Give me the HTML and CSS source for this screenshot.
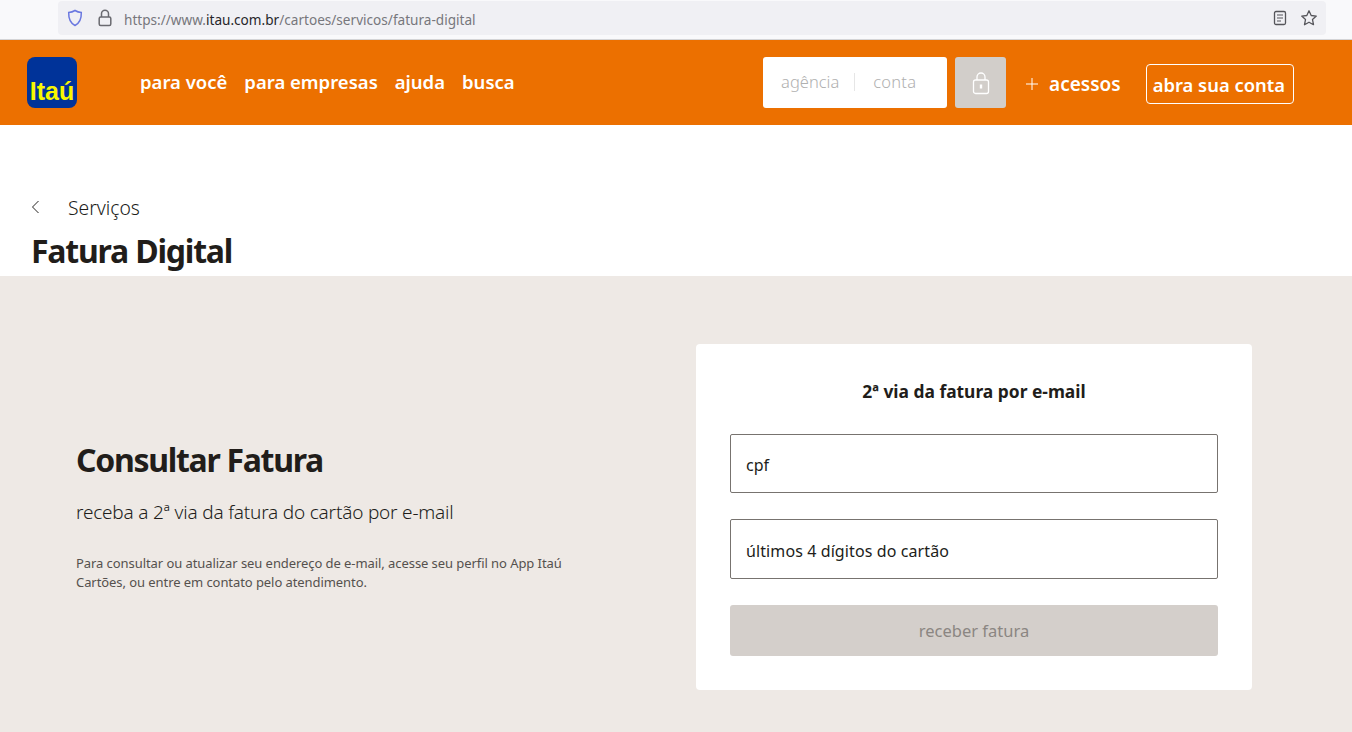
FILE: index.html
```html
<!DOCTYPE html>
<html lang="pt-BR">
<head>
    <meta charset="UTF-8">
    <meta name="viewport" content="width=device-width, initial-scale=1.0">
    <title>Fatura Digital</title>
    <link rel="stylesheet" href="styles.css">
</head>
<body>
    <div class="browser-bar">
        <div class="url-bar">
            <svg class="shield" width="16" height="18" viewBox="0 0 16 18"><path d="M8 1.500c2 1.300 4 1.900 6.300 2 .2 5.500-1.500 10.500-6.300 13-4.800-2.500-6.500-7.500-6.300-13C4 3.400 6 2.800 8 1.500z" fill="none" stroke="#6a78e0" stroke-width="1.500"/></svg>
            <svg class="lock" width="14" height="18" viewBox="0 0 14 18"><path d="M3.500 8V4.800a3.500 3.500 0 0 1 7 0V8" fill="none" stroke="#6a6a70" stroke-width="1.500"/><rect x="1.200" y="8" width="11.600" height="8.400" rx="1.500" fill="none" stroke="#6a6a70" stroke-width="1.500"/></svg>
            <span class="url">https://www.<b>itau.com.br</b>/cartoes/servicos/fatura-digital</span>
            <span class="bar-end">
                <svg width="14" height="16" viewBox="0 0 14 16"><rect x="1.500" y="1.500" width="11" height="13" rx="1.500" fill="none" stroke="#55555a" stroke-width="1.300"/><path d="M4 5h6M4 8h6M4 11h4" stroke="#55555a" stroke-width="1.200"/></svg>
                <svg width="18" height="18" viewBox="0 0 18 18"><path d="M9 1.800l2.200 4.700 5.100.6-3.800 3.500 1 5.100L9 13.200l-4.500 2.500 1-5.100-3.800-3.500 5.100-.6z" fill="none" stroke="#55555a" stroke-width="1.300" stroke-linejoin="round"/></svg>
            </span>
        </div>
    </div>

    <header class="site-header">
        <div class="logo">Itaú</div>
        <nav class="main-nav">
            <a>para você</a>
            <a>para empresas</a>
            <a>ajuda</a>
            <a>busca</a>
        </nav>
        <div class="login-box">
            <span class="login-field">agência</span>
            <span class="login-field conta">conta</span>
        </div>
        <div class="login-btn">
            <svg width="18" height="24" viewBox="0 0 18 24"><path d="M5 9V6a4 4 0 0 1 8 0v3" fill="none" stroke="#fff" stroke-width="1.300"/><rect x="1.500" y="9" width="15" height="13.500" rx="2" fill="none" stroke="#fff" stroke-width="1.300"/><rect x="7.800" y="13.500" width="2.400" height="4" fill="#fff"/></svg>
        </div>
        <div class="acessos">
            <svg width="12" height="12" viewBox="0 0 12 12"><path d="M6 0v12M0 6h12" stroke="#fff" stroke-width="1"/></svg>
            <span>acessos</span>
        </div>
        <a class="abra-conta">abra sua conta</a>
    </header>

    <section class="title-area">
        <div class="back-link">
            <svg width="8" height="14" viewBox="0 0 8 14"><path d="M6.500 1L.5 7l6 6" fill="none" stroke="#252220" stroke-width="1"/></svg>
            <span>Serviços</span>
        </div>
        <h1>Fatura Digital</h1>
    </section>

    <main class="content">
        <div class="intro">
            <h2>Consultar Fatura</h2>
            <p class="lead">receba a 2ª via da fatura do cartão por e-mail</p>
            <p class="note">Para consultar ou atualizar seu endereço de e-mail, acesse seu perfil no App Itaú Cartões, ou entre em contato pelo atendimento.</p>
        </div>
        <form class="card">
            <h3>2ª via da fatura por e-mail</h3>
            <div class="field field-cpf">cpf</div>
            <div class="field field-card">últimos 4 dígitos do cartão</div>
            <div class="submit">receber fatura</div>
        </form>
    </main>
</body>
</html>
```

FILE: styles.css
```css
/* page */
html, body {
    margin: 0;
    padding: 0;
}

body {
    height: 732px;
    overflow: hidden;
    background-color: #fff;
    color: #211d1a;
    font-family: "Noto Sans", "Open Sans", sans-serif;
}

/* browser chrome */
.browser-bar {
    height: 40px;
    padding: 1px 26px 0 58px;
    box-sizing: border-box;
    background-color: #f9f9fb;
    border-bottom: 1px solid #d4d4d6;
}

.url-bar {
    display: flex;
    align-items: center;
    height: 34px;
    padding: 0 8px 0 9px;
    background-color: #f0f0f4;
    border-radius: 4px;
}

.lock {
    margin-left: 15px;
}

.url {
    margin-left: 12px;
    padding-top: 2px;
    font-size: 13.6px;
    color: #77777c;
}

.url b {
    font-weight: 400;
    color: #26262a;
}

.bar-end {
    display: flex;
    align-items: center;
    gap: 13px;
    margin-left: auto;
}

/* orange header */
.site-header {
    display: flex;
    align-items: center;
    height: 85px;
    padding-left: 27px;
    background-color: #ec7000;
    color: #fff;
}

.logo {
    display: flex;
    align-items: flex-end;
    justify-content: center;
    width: 50px;
    height: 51px;
    padding-bottom: 2px;
    box-sizing: border-box;
    background-color: #003399;
    border-radius: 8px;
    color: #f7f700;
    font-family: "Liberation Sans", sans-serif;
    font-size: 25px;
    font-weight: 700;
    line-height: 30px;
}

.main-nav {
    display: flex;
    gap: 17px;
    margin-left: 63px;
    margin-top: -2px;
    font-size: 18.5px;
    font-weight: 600;
}

.login-box {
    display: flex;
    align-items: center;
    width: 184px;
    height: 51px;
    margin-left: auto;
    background-color: #fff;
    border-radius: 3px;
    color: #b0b0b0;
    font-size: 16.5px;
    font-weight: 300;
}

.login-field {
    padding-left: 18px;
    padding-right: 15px;
    margin-top: -2px;
    line-height: 18px;
    border-right: 1px solid #e6e6e6;
}

.login-field.conta {
    border-right: 0;
    letter-spacing: 0.2px;
}

.login-btn {
    display: flex;
    align-items: center;
    justify-content: center;
    width: 51px;
    height: 51px;
    margin-left: 8px;
    background-color: #d2ceca;
    border-radius: 3px;
}

.acessos {
    display: flex;
    align-items: center;
    gap: 11px;
    margin-left: 20px;
    margin-top: 2px;
    font-size: 19px;
    font-weight: 600;
}

.abra-conta {
    margin-left: 25px;
    margin-right: 58px;
    margin-top: 3px;
    padding: 0 8px 0 6px;
    height: 38px;
    line-height: 39px;
    border: 1px solid #fff;
    border-radius: 4px;
    font-size: 18.4px;
    font-weight: 600;
}

/* title */
.title-area {
    height: 151px;
    padding-left: 32px;
    box-sizing: border-box;
    padding-top: 69px;
}

.back-link {
    display: flex;
    align-items: center;
    gap: 28px;
    height: 26px;
    font-size: 19.3px;
    font-weight: 300;
}

.title-area h1 {
    margin: 11px 0 0 -1px;
    font-size: 32px;
    line-height: 40px;
    font-weight: 700;
    letter-spacing: -1.2px;
}

/* grey section */
.content {
    display: flex;
    align-items: flex-start;
    justify-content: space-between;
    height: 457px;
    padding: 68px 100px 0 76px;
    box-sizing: border-box;
    background-color: #eee9e5;
}

.intro {
    width: 500px;
    margin-top: 95px;
}

.intro h2 {
    margin: 0;
    font-size: 32px;
    line-height: 42px;
    font-weight: 700;
    letter-spacing: -1.3px;
}

.lead {
    margin: 17px 0 0;
    font-size: 19px;
    line-height: 28px;
    font-weight: 300;
    letter-spacing: -0.2px;
}

.note {
    margin: 28px 0 0;
    font-size: 13px;
    line-height: 19px;
    letter-spacing: -0.07px;
    color: #55514e;
}

.card {
    width: 556px;
    height: 346px;
    padding: 34px 34px 0;
    box-sizing: border-box;
    background-color: #fff;
    border-radius: 4px;
}

.card h3 {
    margin: 0 0 29px;
    font-size: 17.4px;
    line-height: 27px;
    text-align: center;
    font-weight: 700;
}

.field {
    display: flex;
    align-items: center;
    height: 59px;
    margin-bottom: 26px;
    padding-left: 15px;
    box-sizing: border-box;
    border: 1px solid #77736f;
    border-radius: 2px;
    font-size: 16px;
    color: #211d1a;
}

.field-cpf {
    padding-top: 2px;
}

.field-card {
    height: 60px;
    padding-top: 3px;
    letter-spacing: 0.1px;
}

.submit {
    display: flex;
    align-items: center;
    justify-content: center;
    height: 51px;
    background-color: #d4cfcb;
    border-radius: 3px;
    color: #8b8682;
    font-size: 16.5px;
}
```
